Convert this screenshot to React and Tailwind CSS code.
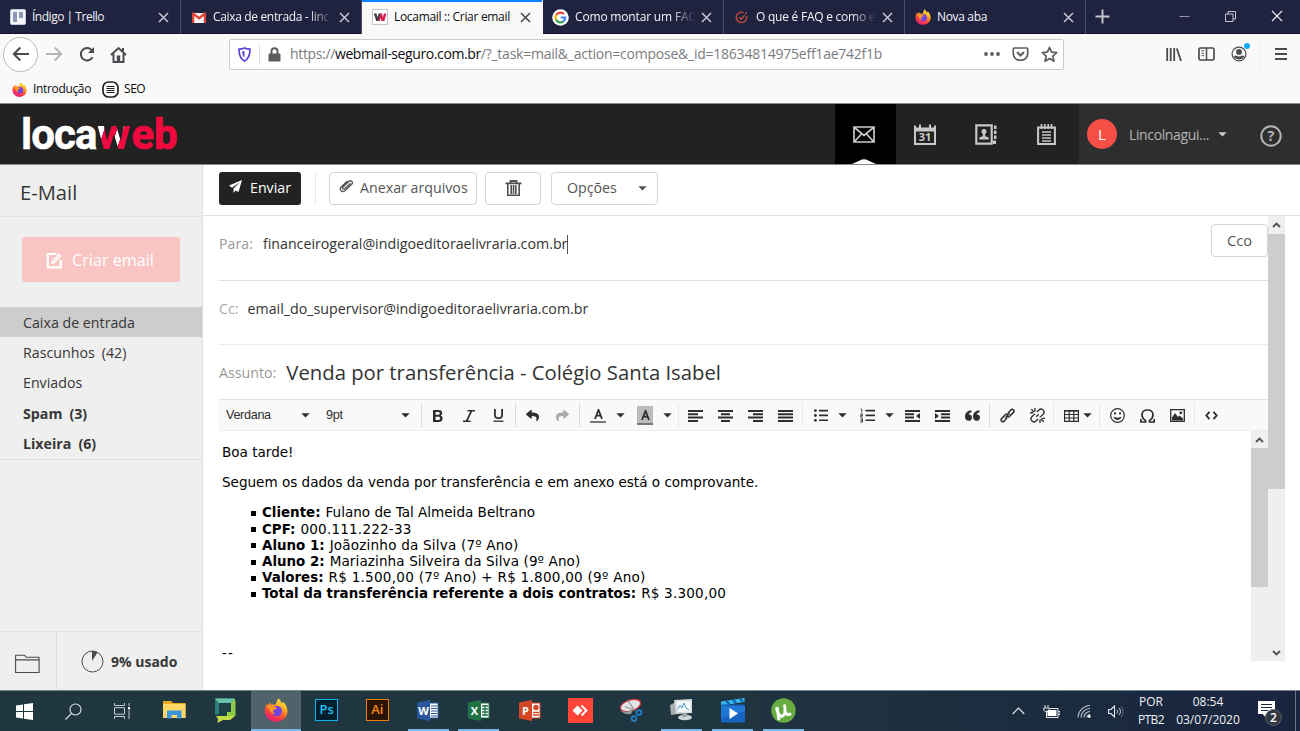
import React from "react";
import { FaReply, FaShare } from "react-icons/fa";

const Svg = ({ w = 16, h = w, vb = `0 0 ${w} ${h}`, className = "", children }) => (
  <svg width={w} height={h} viewBox={vb} fill="none" className={`block shrink-0 ${className}`}>{children}</svg>
);

const Caret = ({ className = "" }) => (
  <Svg w={9} h={5} className={className}><path d="M.3.3h8.4L4.5 4.6z" fill="currentColor" /></Svg>
);

const Close = ({ className }) => (
  <Svg w={11} className={className}><path d="M1 1l9 9M10 1l-9 9" stroke="currentColor" strokeWidth="1.5" /></Svg>
);

const Firefox = ({ s = 16 }) => (
  <Svg w={s} vb="0 0 24 24">
    <defs>
      <linearGradient id={`ff${s}`} x1=".85" y1="0" x2=".3" y2="1">
        <stop offset="0" stopColor="#fff44f" /><stop offset=".35" stopColor="#ffb01f" />
        <stop offset=".65" stopColor="#ff4b36" /><stop offset="1" stopColor="#e3187c" />
      </linearGradient>
    </defs>
    <path d="M14.3.5c2 1.3 2.7 3.3 3.2 4.8 1 .2 1.500-.8 1.300-1.800 2.800 2.500 4.700 6 4.700 9.800C23.500 19.300 18.500 23.800 12.200 23.800S.8 19 .8 13c0-3.200 1-5.800 2.200-7.600l.8 2L6 4.600l1.200 2.200 4.600-.2C12.400 4.500 13 2.300 14.300.5z" fill={`url(#ff${s})`} />
    <circle cx="12.800" cy="13" r="5.200" fill="#7542e5" />
    <path d="M3 8.500c2.500-1.500 5-1 6.500.2 1.500.2 3 .6 3.500 1.300-.5 1.300-2.800 1.200-3.700 2.300-.6 1.300.3 2.800 2.200 3.300-2.500.8-5.500-.8-5.500-3.600C4.500 11 3.500 10 3 8.500z" fill="#ff9a1f" />
  </Svg>
);

const Trello = () => (
  <Svg w={16}><rect x=".5" y=".5" width="15" height="15" rx="1.500" fill="#f4f6fa" stroke="#c5cbdc" /><rect x="3" y="3" width="4" height="10" fill="#8d99bb" /><rect x="9" y="3" width="4" height="6" fill="#8d99bb" /></Svg>
);
const Gmail = () => (
  <Svg w={14} h={11}><path d="M0 1h14v10H0z" fill="#f2f2f2" /><path d="M0 1.200C0 .3 1 0 1.700.5L7 4.800 12.300.5C13 0 14 .3 14 1.200V11h-2.200V3.900L7 7.700 2.200 3.900V11H0z" fill="#df4435" /></Svg>
);
const WFav = () => (
  <Svg w={16}><rect x=".5" y=".5" width="15" height="15" fill="#fff" stroke="#c4c4c4" /><path d="M1.800 4.500h2.700l1 4 1.200-4h2.600L7.500 12H4.300z" fill="#3a3a4a" /><path d="M8.600 4.500h1.500l.8 4 1-4h2.500L12.400 12H9.500L8.500 9 7.500 12H5.800z" fill="#d8214a" /></Svg>
);
const Google = () => (
  <Svg w={17} vb="0 0 17 17">
    <circle cx="8.500" cy="8.500" r="8.300" fill="#fff" />
    <g strokeWidth="2.200"><path d="M12 5A4.900 4.900 0 0 0 4.300 6" stroke="#ea4335" /><path d="M4.300 5.900a4.900 4.900 0 0 0 0 5.100" stroke="#fbbc05" /><path d="M4.200 10.900a4.900 4.900 0 0 0 7.300 1.500" stroke="#34a853" /><path d="M8.700 8.500h4.500a4.900 4.900 0 0 1-1.800 4" stroke="#4285f4" /></g>
  </Svg>
);
const CheckFav = () => (
  <Svg w={13} className="text-[#c04a3c]"><path d="M8.500 1.600A5.200 5.200 0 1 0 11.500 5M4 6.300l2 2 3.800-4" stroke="currentColor" strokeWidth="1.400" /><circle cx="11" cy="2.200" r="1" fill="currentColor" /></Svg>
);

const Tab = ({ icon, text, active, fade, track = "tracking-[-0.34px]" }) => (
  <div className={`flex h-[34px] w-[181px] shrink-0 items-center border-r pl-[9px] ${active ? "border-[#f9f9fa] bg-[#f9f9fa] text-[#0c0c0d] shadow-[inset_0_2px_0_#0a84ff]" : "border-[#4a4d6b] text-[#f2f2f6]"}`}>
    <div className="flex w-[17px] justify-center">{icon}</div>
    <div className={`ml-[6px] w-[120px] whitespace-nowrap text-[12px] leading-[18px] ${track} ${fade ? "[mask-image:linear-gradient(90deg,#000_80%,transparent_100%)]" : ""}`}>{text}</div>
    <Close className={`ml-[6px] ${active ? "text-[#444]" : "text-[#c5c6d2]"}`} />
  </div>
);

const Chrome = () => (
  <header className="text-[12px] text-[#0c0c0d]">
    <div className="flex h-[34px] bg-[#202340] shadow-[inset_0_-1px_0_#17102e]">
      <Tab icon={<Trello />} text="Índigo | Trello" track="tracking-[-0.48px]" />
      <Tab icon={<Gmail />} text="Caixa de entrada - linc" fade />
      <Tab icon={<WFav />} text="Locamail :: Criar email" active track="tracking-[-0.31px]" />
      <Tab icon={<Google />} text="Como montar um FAQ" fade track="tracking-[-0.17px]" />
      <Tab icon={<CheckFav />} text="O que é FAQ e como e" fade track="tracking-[-0.24px]" />
      <Tab icon={<Firefox />} text="Nova aba" />
      <div className="flex flex-1 items-center text-[#c5c6d2]">
        <Svg w={15} className="ml-[9px] -mt-[2px]"><path d="M7.500 0.500v14M.5 7.500h14" stroke="currentColor" strokeWidth="1.900" /></Svg>
        <Svg w={11} className="ml-[69px] -mt-[2px]"><path d="M.5 5.500h10" stroke="currentColor" opacity=".7" /></Svg>
        <Svg w={11} className="ml-[35px] -mt-[2px]"><path d="M.5 3h7.500v7.500H.5zM3 3V.5h7.500V8H8" stroke="currentColor" /></Svg>
        <Svg w={12} className="-mt-[2px] ml-[35px] text-[#e8e8ee]"><path d="M1 1l10 10M11 1L1 11" stroke="currentColor" strokeWidth="1.200" /></Svg>
      </div>
    </div>
    <div className="flex h-[41px] items-center bg-[#f9f9fa] pb-px text-[#4a4a4f]">
      <div className="ml-[3px] flex h-[35px] w-[35px] items-center justify-center rounded-full border border-[#b9b9ba] bg-white">
        <Svg w={18} h={16}><path d="M17 8H2M8.300 1.500L1.800 8l6.500 6.500" stroke="currentColor" strokeWidth="2" /></Svg>
      </div>
      <Svg w={18} h={16} className="ml-[7px] text-[#b5b5b8]"><path d="M1 8h15M9.700 1.500L16.200 8l-6.500 6.500" stroke="currentColor" strokeWidth="2" /></Svg>
      <Svg w={17} h={17} className="ml-[15px]"><path d="M14.500 11.200A6.200 6.200 0 1 1 14 4.500" stroke="currentColor" strokeWidth="2" /><path d="M16 1v6h-6z" fill="currentColor" /></Svg>
      <Svg w={17} h={17} className="ml-[15px]"><path d="M1 9l7.500-7L16 9M3.500 8v8h10V8M13 2v3" stroke="currentColor" strokeWidth="2" /><path d="M6.800 9.500h3.400V15H6.800z" fill="currentColor" /></Svg>
      <div className="ml-[102px] flex h-[31px] w-[835px] items-center rounded-[2px] border border-[#cccccd] bg-white">
        <Svg w={13} h={15} className="ml-[8px]"><path d="M6.500 1c2 1 3.700 1.200 5.500 1.200 0 5-.8 9.300-5.500 11.800C1.800 11.500 1 7.200 1 2.200 2.800 2.200 4.500 2 6.500 1z" stroke="#5a45dd" strokeWidth="1.700" fill="#fff" /><path d="M6.500 4v6.500C4.500 9 4.200 7 4.100 4.600z" fill="#5a45dd" /></Svg>
        <div className="ml-[8px] h-[21px] w-px bg-[#e3e3e3]" />
        <Svg w={13} h={15} className="ml-[8px]"><path d="M3.500 7V4.300a3 3 0 0 1 6 0V7" stroke="#5c5c5f" strokeWidth="2" /><rect x=".5" y="6.500" width="12" height="8" rx="1.200" fill="#5c5c5f" /></Svg>
        <div className="ml-[9px] w-[690px] whitespace-nowrap text-[14px] leading-5 tracking-[-0.235px] text-[#7b7b7f]"><span className="tracking-[-0.35px]">https://</span><span className="tracking-[-0.4px] text-[#0c0c0d]">webmail-seguro.com.br</span>/?_task=mail&amp;_action=compose&amp;_id=18634814975eff1ae742f1b</div>
        <div className="ml-[4px] flex items-center text-[#5c5c5f]">
          <Svg w={16} h={4}><circle cx="2" cy="2" r="1.900" fill="currentColor" /><circle cx="8" cy="2" r="1.900" fill="currentColor" /><circle cx="14" cy="2" r="1.900" fill="currentColor" /></Svg>
          <Svg w={17} h={14} className="ml-[12px]"><path d="M2.300 1h12.400a1 1 0 0 1 1 1v4.500c0 9-14.400 9-14.400 0V2a1 1 0 0 1 1-1z" stroke="currentColor" strokeWidth="1.700" /><path d="M5 5l3.500 3.500L12 5" stroke="currentColor" strokeWidth="2" /></Svg>
          <Svg w={17} h={17} className="ml-[12px]"><path d="M8.500 1.500l2.100 4.700 5.100.5-3.900 3.400 1.200 5.100-4.500-2.700L4 15.200l1.200-5.100-3.900-3.400 5.100-.5z" stroke="currentColor" strokeWidth="1.700" strokeLinejoin="round" /></Svg>
        </div>
      </div>
      <Svg w={16} h={15} className="ml-[102px]"><path d="M1.200 1v13M4.700 1v13M8.200 1v13M10.800 1.500l4.200 12.500" stroke="currentColor" strokeWidth="1.800" /></Svg>
      <Svg w={17} h={14} className="ml-[16px]"><rect x="1" y="1" width="15" height="12" rx="1.500" stroke="currentColor" strokeWidth="1.700" /><path d="M8.500 1v12" stroke="currentColor" strokeWidth="1.500" /><path d="M3.500 3.800H6M3.500 6.300H6M3.500 8.700H6" stroke="currentColor" /></Svg>
      <div className="relative ml-[16px]">
        <Svg w={16} h={16}><circle cx="8" cy="8" r="6.900" stroke="currentColor" strokeWidth="1.200" /><circle cx="8" cy="5.900" r="2.900" fill="currentColor" /><path d="M2.800 10.200a4 4 0 0 1 2-.8c2 1.300 4.400 1.300 6.400 0a4 4 0 0 1 2 .8C11.500 14.600 4.500 14.600 2.800 10.200z" fill="currentColor" /></Svg>
        <span className="absolute -top-[3px] left-[13px] h-[6px] w-[6px] rounded-full bg-[#0aaef5]" />
      </div>
      <div className="ml-[12px] h-[35px] w-px bg-[#ededee]" />
      <Svg w={12} h={12} className="ml-[15px]"><path d="M0 1h12M0 6h12M0 11h12" stroke="currentColor" strokeWidth="2" /></Svg>
    </div>
    <div className="flex h-[28px] items-center bg-[#f9f9fa] pl-[12px]">
      <Firefox s={15} />
      <span className="ml-[6px] tracking-[-0.34px]">Introdução</span>
      <Svg w={17} className="ml-[11px]"><rect x="1" y="1" width="15" height="15" rx="5.500" stroke="#222" strokeWidth="1.700" /><path d="M4.500 5.500h8M4.500 7.500h8M4.500 9.500h8M4.500 11.500h8" stroke="#222" strokeWidth="1.100" /></Svg>
      <span className="ml-[5px] tracking-[-0.5px]">SEO</span>
    </div>
  </header>
);

const TopBar = () => (
  <div className="flex h-[62px] items-stretch border-b border-t border-b-[#8a8a8a] border-t-[#8a8a8a] bg-[#222] text-[#c9c9c9]">
    <div className="flex flex-1 items-center pl-[21px] pt-[2px] font-['Roboto'] text-[42px] font-bold leading-[60px] text-white">
      <span className="tracking-[-0.9px] [-webkit-text-stroke:0.5px_#fff]">loca</span>
      <span className="mr-[4px] origin-left scale-x-[1.1] bg-[linear-gradient(107deg,#fff_0%,#fff_28%,#f0093f_29%,#f0093f_52%,#fff_53%,#fff_63%,#f0093f_64%)] bg-clip-text text-transparent">w</span>
      <span className="text-[#f0093f] [-webkit-text-stroke:0.7px_#f0093f]">eb</span>
    </div>
    <div className="relative flex w-[61px] items-center justify-center bg-black pr-[4px]">
      <Svg w={22} h={17}><path d="M1 1h20v15H1zM1.500 1.500L11 9.500l9.500-8M1.500 15.500l7-7.500M20.500 15.500l-7-7.500" stroke="currentColor" strokeWidth="1.700" /></Svg>
      <Svg w={24} h={5} className="absolute bottom-0 left-[17px]"><path d="M0 5L10 .6q2-.9 4 0L24 5z" fill="#fff" /></Svg>
    </div>
    <div className="flex w-[61px] items-center justify-center pr-[4px] pt-[1px]">
      <Svg w={22} h={21}><path d="M0 1.500h2v2h3v-3h2v3h8v-3h2v3h3v-2h2V21H0z" fill="currentColor" /><path d="M2 7.500h18V19H2z" fill="#222" /><text x="11" y="17.200" textAnchor="middle" fontSize="11" fontWeight="700" fontFamily="Open Sans" fill="currentColor">31</text></Svg>
    </div>
    <div className="flex w-[61px] items-center justify-center pr-[4px] pt-[1px]">
      <Svg w={22} h={21}><path d="M1.300 1.300h15.400v18.400H1.300z" stroke="currentColor" strokeWidth="2.200" /><path d="M19 1.500h2.500v3.500H19zM19 6.500h2.500V10H19zM19 11.500h2.500V15H19zM18 16.500h3V20h-3z" fill="currentColor" /><circle cx="9" cy="7.500" r="2.500" fill="currentColor" /><path d="M7.800 9.500h2.400v2.700l3.500 1.200v2.100H4.300v-2.100l3.500-1.200z" fill="currentColor" /></Svg>
    </div>
    <div className="flex w-[61px] items-center justify-center pr-[4px] pt-[1px]">
      <Svg w={19} h={21}><path d="M1.100 3.500h16.800v16.400H1.100z" stroke="currentColor" strokeWidth="2" /><path d="M4.500 0v5M7.800 0v5M11.200 0v5M14.500 0v5" stroke="currentColor" strokeWidth="1.700" /><path d="M5 8h9M5 11h9M5 14h9M5 17h9" stroke="currentColor" strokeWidth="1.500" /></Svg>
    </div>
    <div className="flex w-[221px] items-center bg-[#2e2e2e]">
      <div className="ml-[8px] flex h-[30px] w-[30px] items-center justify-center rounded-full bg-[#f64f45] text-[15px] text-white">L</div>
      <span className="ml-[12px] w-[82px] text-[14px] tracking-[-0.37px] text-[#b5b5b5]">Lincolnagui...</span>
      <Caret className="ml-[7px]" />
      <Svg w={22} className="ml-[33px] mt-[3px]"><circle cx="11" cy="11" r="9.700" stroke="#b5b5b5" strokeWidth="2" /><text x="11" y="16" textAnchor="middle" fontSize="14.500" fontWeight="700" fontFamily="Open Sans" fill="#b5b5b5">?</text></Svg>
    </div>
  </div>
);

const folders = [
  { name: "Caixa de entrada", selected: true },
  { name: "Rascunhos", count: 42 },
  { name: "Enviados" },
  { name: "Spam", count: 3, bold: true },
  { name: "Lixeira", count: 6, bold: true },
];

const Sidebar = () => (
  <aside className="flex w-[203px] shrink-0 flex-col border-r border-[#dedede] bg-[#efefef] text-[#373737]">
    <div className="flex h-[52px] items-center border-b border-[#dfdfdf] pl-[20px] pt-[4px] text-[20.200px]">E-Mail</div>
    <div className="h-[90px] px-[22px] pt-[20px]">
      <div className="flex h-[45px] items-center rounded-[3px] bg-[#f8c5c2] pl-[24px] pt-[1px] text-[16.200px] text-white">
        <Svg w={17} h={17}><path d="M10.500 2H1.800v13.300h13V8" stroke="#fff" strokeWidth="2.200" /><path d="M5 12l.8-3.500L13 1.300 15.700 4 8.500 11.200z" fill="#fff" /><path d="M7 9.800l6.300-6.300" stroke="#f8c5c2" /></Svg>
        <span className="ml-[9px]">Criar email</span>
      </div>
    </div>
    <ul className="h-[153px] border-b border-[#e2e2e2]">
      {folders.map((f) => (
        <li key={f.name} className={`flex h-[30.400px] items-center gap-[7px] pl-[23px] text-[14.220px] ${f.selected ? "bg-[#cdcdcd]" : ""} ${f.bold ? "font-bold" : ""}`}>
          <span>{f.name}</span>{f.count && <span>({f.count})</span>}
        </li>
      ))}
    </ul>
    <div className="mt-auto flex h-[59px] border-t border-[#dfdfdf]">
      <div className="flex w-[57px] items-center border-r border-[#dfdfdf] pl-[15px] pt-[6px]">
        <Svg w={25} h={20}><path d="M.6 18.500V1.200h9l1.500 2h13v15.300zM.6 5.900h23.500" stroke="#4a4a4a" strokeWidth="1.100" /></Svg>
      </div>
      <div className="flex items-center pl-[24px] text-[14px] font-bold">
        <Svg w={23}><circle cx="11.500" cy="11.500" r="10.500" stroke="#4a4a4a" strokeWidth="1" /><path d="M11 11V1a10 10 0 0 1 5.600 1.600z" fill="#4a4a4a" /></Svg>
        <span className="ml-[7px]">9% usado</span>
      </div>
    </div>
  </aside>
);

const Sep = ({ className = "" }) => <div className={`h-[24px] w-px shrink-0 bg-[#dcdcdc] ${className}`} />;
const Cell = ({ className = "w-[30px]", children }) => <div className={`flex shrink-0 items-center justify-center pt-px ${className}`}>{children}</div>;
const Lines = ({ d }) => <Svg w={15} h={12}><path d={d} fill="currentColor" /></Svg>;

const EditorToolbar = () => (
  <div className="flex h-[32px] items-center border-b border-t border-b-[#eeeeee] border-t-[#e2e2e2] bg-[#f9f9f9] text-[#2e2e2e]">
    <div className="flex w-[102px] shrink-0 items-center justify-between pl-[7px] pr-[11px] pt-px font-['Liberation_Sans'] text-[12.600px] tracking-[-0.3px]">Verdana<Caret /></div>
    <div className="flex w-[100px] shrink-0 items-center justify-between pl-[5px] pr-[11px] pt-px font-['Liberation_Sans'] text-[12.600px] tracking-[-0.3px]">9pt<Caret /></div>
    <Sep />
    <Cell className="w-[32px]"><Svg w={10} h={12}><path d="M0 0h5.600C8 0 9.200 1.300 9.200 3c0 1.200-.6 2-1.500 2.500C8.900 6 9.600 7 9.600 8.500 9.600 10.700 8.200 12 5.700 12H0zM2.600 2v2.800h2.600c1 0 1.500-.5 1.500-1.400S6.200 2 5.200 2zM2.600 6.700V10h2.800c1.100 0 1.700-.6 1.700-1.700s-.6-1.600-1.700-1.600z" fill="currentColor" fillRule="evenodd" /></Svg></Cell>
    <Cell className="w-[29px]"><Svg w={12} h={12}><path d="M4.500.7H12M0 11.300h7.500M8.700.7L3.400 11.300" stroke="currentColor" strokeWidth="1.700" /></Svg></Cell>
    <Cell><Svg w={11} h={13}><path d="M1.900 0v5.500c0 5 7.200 5 7.200 0V0" stroke="currentColor" strokeWidth="1.800" /><path d="M.5 12.200h10" stroke="currentColor" strokeWidth="1.300" /></Svg></Cell>
    <Sep className="ml-[2px] mr-[1px]" />
    <Cell><FaReply size={13} /></Cell>
    <Cell className="w-[30px]"><FaShare size={13} className="text-[#a9a9a9]" /></Cell>
    <Sep className="ml-[2px] mr-[3px]" />
    <Cell><div className="flex w-[16px] flex-col items-center"><Svg w={9} h={10}><path d="M1 10L4.500.8 8 10M2 6.700h5" stroke="currentColor" strokeWidth="1.800" /></Svg><div className="mt-[2px] h-[2px] w-full bg-[#777]" /></div></Cell>
    <Cell className="w-[14px]"><Caret /></Cell>
    <Cell className="w-[36px]"><div className="flex w-[16px] flex-col items-center bg-[#bbb] pt-[4px]"><Svg w={9} h={10}><path d="M1 10L4.500.8 8 10M2 6.700h5" stroke="currentColor" strokeWidth="1.800" /></Svg><div className="mt-[3px] h-[2px] w-full bg-[#777]" /></div></Cell>
    <Cell className="w-[9px]"><Caret /></Cell>
    <Sep className="ml-[6px] mr-[1px] bg-[#e8e8e8]" />
    <Cell><Lines d="M0 0h15v2H0zM0 3.300h10v2H0zM0 6.600h15v2H0zM0 10h10v2H0z" /></Cell>
    <Cell><Lines d="M0 0h15v2H0zM3 3.300h9v2H3zM0 6.600h15v2H0zM3 10h9v2H3z" /></Cell>
    <Cell><Lines d="M0 0h15v2H0zM5 3.300h10v2H5zM0 6.600h15v2H0zM5 10h10v2H5z" /></Cell>
    <Cell><Lines d="M0 0h15v2H0zM0 3.300h15v2H0zM0 6.600h15v2H0zM0 10h15v2H0z" /></Cell>
    <Sep className="ml-[2px] mr-[3px] bg-[#e8e8e8]" />
    <Cell><Svg w={14} h={13}><path d="M5 .8h9v1.700H5zM5 5.600h9v1.700H5zM5 10.400h9v1.700H5z" fill="currentColor" /><circle cx="1.400" cy="1.600" r="1.400" fill="currentColor" /><circle cx="1.400" cy="6.500" r="1.400" fill="currentColor" /><circle cx="1.400" cy="11.300" r="1.400" fill="currentColor" /></Svg></Cell>
    <Cell className="mr-[2px] w-[12px]"><Caret /></Cell>
    <Cell className="w-[34px]"><Svg w={15} h={15}><path d="M5.500 1.800H15v1.700H5.500zM5.500 6.600H15v1.700H5.500zM5.500 11.400H15v1.700H5.500z" fill="currentColor" /><path d="M.5 1.200h1.300V4.500M.3 6h2.200v1.400H.7v1.700h2.100M.3 10.900h2.200v3.300H.3M.6 12.500h1.900" stroke="currentColor" strokeWidth=".9" /></Svg></Cell>
    <Cell className="w-[10px]"><Caret /></Cell>
    <Cell className="ml-[3px] w-[30px]"><Lines d="M0 0h15v2H0zM0 3.300h9v2H0zM0 6.600h9v2H0zM0 10h15v2H0zM15 3v6l-4-3z" /></Cell>
    <Cell><Lines d="M0 0h15v2H0zM6 3.300h9v2H6zM6 6.600h9v2H6zM0 10h15v2H0zM0 3v6l4-3z" /></Cell>
    <Cell><Svg w={15} h={11}><path d="M6.500.2v2C4.800 2.500 4 3.300 3.700 4.400 5.700 4.300 7 5.500 7 7.400 7 9.300 5.600 10.800 3.600 10.800 1.300 10.800 0 9 0 6.600 0 3 2.500.5 6.500.2zM14.500.2v2c-1.700.3-2.500 1.100-2.800 2.200 2-.1 3.300 1.100 3.300 3 0 1.900-1.400 3.400-3.400 3.400C9.300 10.800 8 9 8 6.600 8 3 10.500.5 14.500.2z" fill="currentColor" /></Svg></Cell>
    <Sep className="ml-[2px] mr-[2px]" />
    <Cell><Svg w={15} vb="0 0 24 24"><path d="M13.500 7.500l4-4.500a2.700 2.700 0 0 1 4 4L15 13.500a2.700 2.700 0 0 1-4 0M10.500 16.500l-4 4.500a2.700 2.700 0 0 1-4-4L9 10.500a2.700 2.700 0 0 1 4 0" stroke="currentColor" strokeWidth="2.400" strokeLinecap="round" /><path d="M8.500 15.500l7-7" stroke="currentColor" strokeWidth="2" /></Svg></Cell>
    <Cell><Svg w={15} vb="0 0 24 24"><path d="M15.500 14.300c1 0 1.800-.6 2.500-1.300l3-3a4.500 4.500 0 0 0-7-6.500l-3 3M8.500 9.700c-1 0-1.800.6-2.500 1.300l-3 3a4.500 4.500 0 0 0 7 6.500l3-3M10 14l4-4M8 0v5.500M2 2l4.500 4.500M0 7.500h5M16 24v-5.500M22 22l-4.500-4.500M24 16.500h-5" stroke="currentColor" strokeWidth="2.200" /></Svg></Cell>
    <Sep className="ml-[1px] mr-[5px] bg-[#e8e8e8]" />
    <Cell className="w-[24px]"><Svg w={15} h={12}><path d="M0 .8h15" stroke="currentColor" strokeWidth="1.700" /><path d="M.6 0v11.400h13.800V0M5.200 1v10M9.800 1v10M.6 4.500h13.800M.6 8h13.800" stroke="currentColor" strokeWidth="1.200" /></Svg></Cell>
    <Cell className="w-[8px]"><Caret /></Cell>
    <Sep className="ml-[8px] mr-[2px] bg-[#e8e8e8]" />
    <Cell><Svg w={15}><circle cx="7.500" cy="7.500" r="6.800" stroke="currentColor" strokeWidth="1.200" /><circle cx="5" cy="5.400" r="1.100" fill="currentColor" /><circle cx="10" cy="5.400" r="1.100" fill="currentColor" /><path d="M3.500 8.500c1.500 1.500 6.500 1.500 8 0-.5 4.500-7.500 4.500-8 0z" fill="currentColor" /></Svg></Cell>
    <Cell><Svg w={15} h={14}><path d="M0 13h5.500v-1.600C.4 8.300.8 1 7.500 1s7.100 7.300 2 10.400V13H15M.8 10v3M14.200 10v3" stroke="currentColor" strokeWidth="1.700" /></Svg></Cell>
    <Cell><Svg w={15} h={13}><path d="M.7.700h13.600v11.600H.7z" stroke="currentColor" strokeWidth="1.300" /><path d="M2 11.500V8.500l3-4.500 3 4 1.500-1.500 3.500 3v2z" fill="currentColor" /><circle cx="10.800" cy="3.800" r="1.400" fill="currentColor" /></Svg></Cell>
    <Sep className="ml-[2px] mr-[1px] bg-[#e8e8e8]" />
    <Cell><Svg w={13} h={9}><path d="M4.500.8L1.300 4.500l3.200 3.700M8.500.8l3.200 3.700-3.200 3.700" stroke="currentColor" strokeWidth="1.800" /></Svg></Cell>
  </div>
);

const Btn = ({ className = "", children }) => (
  <div className={`flex h-[33px] items-center rounded-[4px] border border-[#d4d4d4] text-[14.220px] text-[#555] ${className}`}>{children}</div>
);
const Chev = ({ className = "" }) => <Svg w={9} h={6} className={className}><path d="M1 1l3.500 3.500L8 1" stroke="#505050" strokeWidth="1.800" /></Svg>;

const items = [
  ["Cliente:", "Fulano de Tal Almeida Beltrano", ""],
  ["CPF:", "000.111.222-33", "tracking-[0.2px]"],
  ["Aluno 1:", "Joãozinho da Silva (7º Ano)", "tracking-[0.2px]"],
  ["Aluno 2:", "Mariazinha Silveira da Silva (9º Ano)", "tracking-[0.11px]"],
  ["Valores:", "R$ 1.500,00 (7º Ano) + R$ 1.800,00 (9º Ano)", "tracking-[0.26px]"],
  ["Total da transferência referente a dois contratos:", "R$ 3.300,00", "tracking-[0.2px]"],
];

const Compose = () => (
  <main className="flex flex-1 flex-col bg-white text-[14.220px] text-[#333]">
    <div className="flex h-[51px] items-center border-b border-[#e0e0e0] pb-[4px] pl-[16px]">
      <div className="flex h-[33px] w-[82px] items-center rounded-[3px] bg-[#222] pl-[10px] text-white">
        <Svg w={13} h={13} className="-mt-[3px]"><path d="M13 0L0 5.500l3 2.200L11 2 4.500 8.500V13l2-2.600L9.500 12z" fill="#fff" /></Svg>
        <span className="ml-[8px]">Enviar</span>
      </div>
      <div className="ml-[14px] h-[33px] w-px bg-[#e8e8e8]" />
      <Btn className="ml-[13px] w-[148px] pl-[9px]">
        <Svg w={15} h={14} className="-mt-[4px]"><path d="M11.500 4.200L5.700 9.700c-1.300 1.200-3-.4-1.700-1.700l5.800-5.500c2.200-2 5 .7 2.900 2.800l-6.500 6.200c-3 2.700-6.600-.8-3.800-3.700L8.500 2" stroke="#555" strokeWidth="1.300" /></Svg>
        <span className="ml-[6px]">Anexar arquivos</span>
      </Btn>
      <Btn className="ml-[8px] w-[56px] justify-center">
        <Svg w={17} h={17}><path d="M.5 3.300h16M5.500 3V1h6v2" stroke="#505050" strokeWidth="1.800" /><path d="M2.800 4v11.200h11.400V4M6.200 5v9M8.500 5v9M10.800 5v9" stroke="#505050" strokeWidth="1.600" /></Svg>
      </Btn>
      <Btn className="ml-[10px] w-[107px] pl-[15px]">Opções<Caret className="ml-[21px]" /></Btn>
    </div>
    <div className="flex h-[445px] pl-[16px]">
      <div className="flex w-[1049px] flex-col">
        <div className="flex h-[65px] justify-between border-b border-[#dedede]">
          <div className="flex h-[56px] items-center"><span className="text-[#999]">Para:</span><span className="ml-[10px]">financeirogeral@indigoeditoraelivraria.com.br</span><span className="h-[19px] w-px bg-[#555]" /></div>
          <Btn className="mt-[8px] w-[57px] justify-center"><span className="text-[14.600px]">Cco</span></Btn>
        </div>
        <div className="flex h-[64px] items-center border-b border-[#ececec] pb-[8px]"><span className="text-[#aaa]">Cc:</span><span className="ml-[9px]">email_do_supervisor@indigoeditoraelivraria.com.br</span></div>
        <div className="flex h-[54px] items-center pt-[1px]"><span className="text-[#999]">Assunto:</span><span className="ml-[10px] text-[20.300px]">Venda por transferência - Colégio Santa Isabel</span></div>
        <EditorToolbar />
        <div className="flex flex-1">
          <div className="flex-1 pl-[3px] pt-[13px] font-['DejaVu_Sans'] text-[13.560px] leading-[16.200px] text-black">
            <p>Boa tarde!</p>
            <p className="mt-[14px]">Seguem os dados da venda por transferência e em anexo está o comprovante.</p>
            <ul className="mt-[14px] pl-[29px]">
              {items.map(([k, v, track]) => (
                <li key={k} className="flex h-[16.200px] items-baseline"><span className="mb-[2px] mr-[6px] h-[5px] w-[5px] self-center bg-black [translate:0_2px]" /><b className="mr-[5px] text-[13.420px]">{k}</b><span className={track}>{v}</span></li>
              ))}
            </ul>
            <p className="mt-[43px] tracking-[1px]">--</p>
          </div>
          <div className="flex w-[17px] flex-col items-center bg-[#efefef]"><Chev className="mb-[5px] mt-[6px] rotate-180" /><div className="h-[139px] w-full bg-[#cdcdcd]" /></div>
        </div>
      </div>
      <div className="flex w-[17px] flex-col items-center bg-[#efefef]"><Chev className="mb-[6px] mt-[6px] rotate-180" /><div className="h-[255px] w-full bg-[#cdcdcd]" /><Chev className="mb-[5px] mt-auto" /></div>
    </div>
  </main>
);

const Adobe = ({ color, bg, children }) => <div className={`flex h-[22px] w-[23px] items-center justify-center border text-[13px] font-semibold ${color} ${bg}`}>{children}</div>;
const Office = ({ color, letter, children }) => (
  <Svg w={22} h={21}><rect x="11" y="3" width="10" height="15" fill="#fff" stroke={color} />{children}<path d="M0 2.500L13 0v21L0 18.500z" fill={color} /><text x="6.500" y="14.500" textAnchor="middle" fontSize="11" fontWeight="700" fontFamily="Open Sans" fill="#fff">{letter}</text></Svg>
);
const TaskApp = ({ active, running, children }) => (
  <div className={`flex w-[50.750px] shrink-0 flex-col items-center ${active ? "bg-[#50626a]" : ""}`}>
    <div className="flex flex-1 items-center pb-[2px]">{children}</div>
    <div className={`-mt-[2px] h-[2px] ${running ? "bg-[#76b9ed]" : ""} ${active ? "w-full" : "w-[41px]"}`} />
  </div>
);

const Taskbar = () => (
  <footer className="flex h-[41px] border-t border-[#76858b] bg-[linear-gradient(90deg,#203740_0%,#1f353f_55%,#1b2c3f_80%,#19243f_100%)] text-white">
    <div className="flex w-[48px] items-center justify-center"><Svg w={17}><path d="M0 2.400L7 1.400V8H0zM8 1.300L17 0v8H8zM0 9h7v6.600l-7-1zM8 9h9v8l-9-1.300z" fill="#fff" /></Svg></div>
    <div className="flex w-[50px] items-center justify-center"><Svg w={17}><circle cx="10.500" cy="6.500" r="5.500" stroke="#dfe4e6" strokeWidth="1.100" /><path d="M6.500 10.500L.5 16.500" stroke="#dfe4e6" strokeWidth="1.100" /></Svg></div>
    <div className="mr-[2px] flex w-[49px] items-center justify-center"><Svg w={17} h={16}><path d="M.5 0v2.500h10V0M.5 16v-2.500h10V16M.5 4.700h10v6.500H.5zM15 0v3M15 7.500V16" stroke="#c3cbce" /><path d="M14 4h2v2.500h-2z" fill="#fff" /></Svg></div>
    <TaskApp><Svg w={23} h={18}><path d="M0 0h8l2 2h12.500v15H0z" fill="#e9a820" /><path d="M0 3h22.500v14H0z" fill="#ffd768" /><path d="M4 17.500V9.500h14.500v8H14v-3.500H8.500v3.500z" fill="#3a96dd" /></Svg></TaskApp>
    <TaskApp><Svg w={22} h={25}><path d="M1 .5h19.500v16H1z" fill="#2a7d7b" /><path d="M1 .5h19.500L17 5H5L3 3z" fill="#6cc3ac" /><path d="M5 5h12v9h-4v4.500H5z" fill="#1c4247" /><path d="M20.500.5l1 3v14.500H13V14h4V5z" fill="#8fca4b" /><path d="M2 18h11v-4l1 4h7l-5 4H9l-5.500 3 .5-4z" fill="#c3dc45" /></Svg></TaskApp>
    <TaskApp active running><Firefox s={24} /></TaskApp>
    <TaskApp><Adobe color="border-[#0fb5ea] text-[#19c3f3]" bg="bg-[#031f30]">Ps</Adobe></TaskApp>
    <TaskApp><Adobe color="border-[#ef7d0a] text-[#f9860c]" bg="bg-[#2b1404]">Ai</Adobe></TaskApp>
    <TaskApp running><Office color="#2b579a" letter="W"><path d="M14 6h6M14 8.500h6M14 11h6M14 13.500h6M14 16h6" stroke="#2b579a" /></Office></TaskApp>
    <TaskApp running><Office color="#217346" letter="X"><path d="M14 6h6M14 9h6M14 12h6M14 15h6M17 5v11" stroke="#217346" strokeWidth="1.300" /></Office></TaskApp>
    <TaskApp><Office color="#d24726" letter="P"><circle cx="17" cy="7.500" r="2.700" fill="#d24726" /><path d="M14 12.500h6M14 15h6" stroke="#d24726" strokeWidth="1.300" /></Office></TaskApp>
    <TaskApp><Svg w={25}><path d="M0 0h25v25H0z" fill="#ff4438" /><path d="M4.500 12.500L9.500 7.500l5 5-5 5z" fill="#fff" /><path d="M13.500 7.500l5 5-5 5" stroke="#fff" strokeWidth="2" /></Svg></TaskApp>
    <TaskApp><Svg w={24} h={24}><ellipse cx="11.500" cy="7.500" rx="10.500" ry="5.500" transform="rotate(-18 11.500 7.500)" fill="#e3e5e5" stroke="#c9333d" strokeWidth="1.300" /><path d="M1.500 12c4 2.500 9 2 12-.5l-1 4C9 17 4 16 1.500 12z" fill="#8f999d" /><path d="M9 2.500l6 9M6 8.500l10 4" stroke="#8a9398" strokeWidth="1.200" /><circle cx="15" cy="20.500" r="2.400" stroke="#2181c8" strokeWidth="1.800" /><circle cx="20" cy="14.500" r="2.400" stroke="#2181c8" strokeWidth="1.800" /></Svg></TaskApp>
    <TaskApp running><Svg w={24} h={22}><path d="M0 6l8-4v13l-7 1z" fill="#a8afb1" /><path d="M4 1l18-1v14L6 15z" fill="#d5dbdc" /><path d="M6.500 2.500L20.500 2v10.500L8 13z" fill="#f5fafc" /><path d="M8 10l2-4 2 3 2-5 2 5 3 2" stroke="#4a9cc9" /><ellipse cx="15" cy="18.500" rx="7" ry="2.800" fill="#cfd4d5" /><path d="M12 14h5v4h-5z" fill="#9ba3a5" /></Svg></TaskApp>
    <TaskApp running><Svg w={26} h={25}><path d="M1 3.500L24.500 0v4L1 7.500z" fill="#3bb8ec" /><path d="M6 2.700l3.500 3.500M13 1.700l3.500 3.500M20 .7l3 3" stroke="#0f5fae" strokeWidth="2" /><rect x="1" y="6.500" width="24" height="18" rx="1.500" fill="#1664c0" /><path d="M1 8h24v5L1 20z" fill="#1f78d4" /><path d="M9.500 10v11l8.500-5.500z" fill="#fff" /></Svg></TaskApp>
    <TaskApp running><Svg w={25}><circle cx="12.500" cy="12.500" r="12.200" fill="#69ad42" /><path d="M5.500 9.500c1 6 3 9.500 6 8.500 3-1.200 3-5.500 2-11.500M14 13c1 3.800 3 4.500 6 2.500M6 9l2 13" stroke="#fff" strokeWidth="2.900" /></Svg></TaskApp>
    <div className="ml-auto flex items-center text-[12px] text-[#eef0f3]">
      <Svg w={13} h={8}><path d="M.7 7l5.800-6 5.800 6" stroke="#e4e7ea" strokeWidth="1.100" /></Svg>
      <Svg w={17} h={13} className="ml-[18px]"><path d="M4.500 5h9v6h-9z" fill="#fff" /><path d="M3.500 9v3.500h11.500V3.500H7M15.500 6.500H17v3h-1.500M2 0v2.500M5 0v2.500M.8 3h5.400v1.500c0 3-5.400 3-5.400 0zM3.500 6v3" stroke="#fff" strokeWidth=".9" /></Svg>
      <Svg w={14} h={14} className="ml-[17px]"><path d="M1 13.500A12.500 12.500 0 0 1 13 1.500M4 13.500a9 9 0 0 1 9-9M7 13.500a6 6 0 0 1 6-6M10 13.500a3 3 0 0 1 3-3" stroke="#bcc4cd" strokeWidth="1.100" /><circle cx="12.300" cy="12.500" r="1.400" fill="#fff" /></Svg>
      <Svg w={16} h={13} className="ml-[17px]"><path d="M.6 4.500H3L6.500 1v11L3 8.500H.6z" stroke="#e8ebee" strokeWidth="1.100" /><path d="M8.800 4.800a2.500 2.500 0 0 1 0 3.600M11 3a5 5 0 0 1 0 7" stroke="#d0d5db" /><path d="M13 1.300a7.500 7.500 0 0 1 0 10.500" stroke="#6d7888" /></Svg>
      <div className="ml-[12px] flex w-[30px] flex-col items-center leading-[18px]"><span>POR</span><span className="tracking-[-0.6px]">PTB2</span></div>
      <div className="ml-[8px] flex w-[68px] flex-col items-center leading-[18px]"><span>08:54</span><span>03/07/2020</span></div>
      <div className="ml-[15px] mr-[13px] pt-[4px]">
        <Svg w={25} h={26}><path d="M1 1h17v13H9.500v4L5.500 14H1z" fill="#fff" /><path d="M4 4.500h11M4 7.500h11M4 10.500h7" stroke="#1a2540" strokeWidth="1.200" /><circle cx="16.500" cy="17.500" r="7.900" fill="#32363f" stroke="#5d6069" /><text x="16.500" y="21.800" textAnchor="middle" fontSize="12" fontWeight="600" fontFamily="Open Sans" fill="#fff">2</text></Svg>
      </div>
      <div className="mr-[4px] h-[40px] w-px bg-[#6c7585]" />
    </div>
  </footer>
);

export default function App() {
  return (
    <div className="flex h-[731px] w-[1300px] flex-col overflow-hidden bg-white font-['Open_Sans',sans-serif]">
      <Chrome />
      <TopBar />
      <div className="flex flex-1"><Sidebar /><Compose /></div>
      <Taskbar />
    </div>
  );
}
